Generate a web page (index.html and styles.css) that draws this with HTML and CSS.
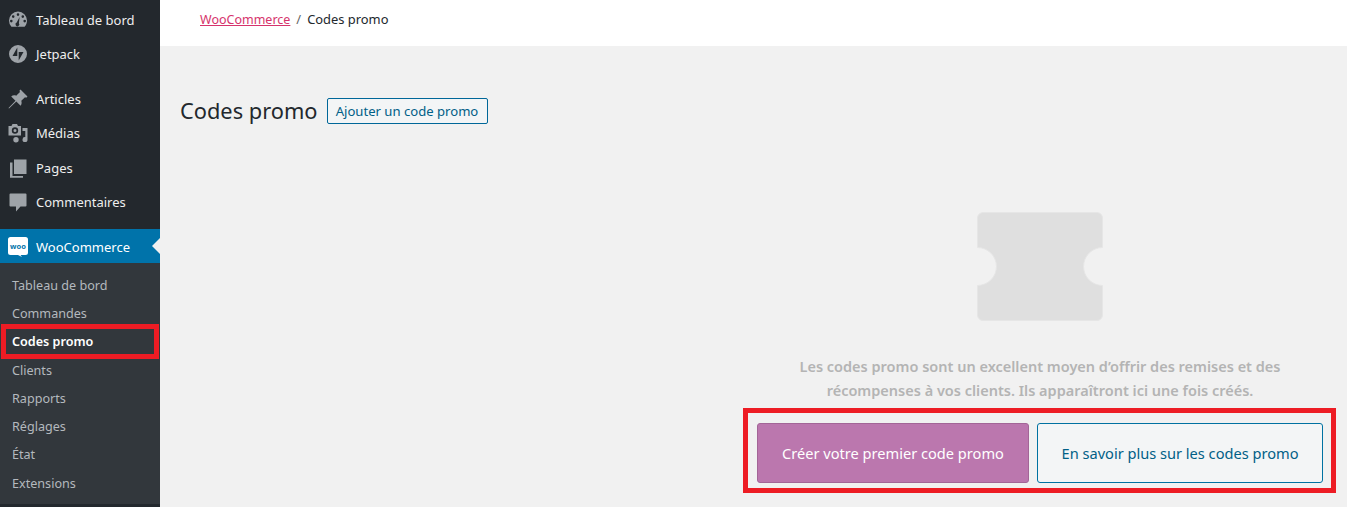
FILE: index.html
```html
<!DOCTYPE html>
<html>
<head>
    <title>Codes promo</title>
    <link rel="stylesheet" href="styles.css">
</head>
<body>
    <div class="page">
        <nav class="sidebar">
            <ul class="menu">
                <li class="menu-item">
                    <svg class="menu-icon" viewBox="0 0 20 20"><path fill-rule="evenodd" d="M10 1.500a9 9 0 0 1 9 9c0 2.500-.9 4.700-2.400 6.300H3.400A9 9 0 0 1 1 10.500a9 9 0 0 1 9-9zM10 3.300a1.300 1.300 0 1 0 0 2.600 1.300 1.300 0 0 0 0-2.600zM5.200 5.300a1.300 1.300 0 1 0 0 2.600 1.300 1.300 0 0 0 0-2.600zM14.800 5.300a1.300 1.300 0 1 0 0 2.600 1.300 1.300 0 0 0 0-2.600zM3.300 9.800a1.300 1.300 0 1 0 0 2.600 1.300 1.300 0 0 0 0-2.600zM16.700 9.800a1.300 1.300 0 1 0 0 2.600 1.300 1.300 0 0 0 0-2.600zM11.600 7l-2.900 5.600a1.900 1.900 0 1 0 2.200.6z"/></svg>
                    Tableau de bord
                </li>
                <li class="menu-item">
                    <svg class="menu-icon" viewBox="0 0 20 20"><path fill-rule="evenodd" d="M10 1a9 9 0 1 1 0 18 9 9 0 0 1 0-18zM9.300 3.500L4.500 12h4.800zM10.700 8v8.500l4.800-8.500z"/></svg>
                    Jetpack
                </li>
                <li class="menu-item menu-gap">
                    <svg class="menu-icon" viewBox="0 0 20 20"><path d="M12.500.5l7 7-1.300 1.200-1.200-.5-3.700 3.600c.7 2 .3 3.700-.7 5L8.300 12.500 1 19.500l-.5-.5 7-7.300L3.200 7.400c1.300-1 3-1.400 5-.7L12 3l-.6-1.300z"/></svg>
                    Articles
                </li>
                <li class="menu-item">
                    <svg class="menu-icon" viewBox="0 0 20 20"><path fill-rule="evenodd" d="M.5 3h3l1-2h4.500l1 2h3v9.500H.5zM7 4.300a3.200 3.200 0 1 0 0 6.400 3.200 3.200 0 0 0 0-6.400zM7 6a1.500 1.500 0 1 1 0 3 1.500 1.500 0 0 1 0-3zM14.500 5H19.500v11.500a2.500 2.500 0 1 1-2.200-2.400V8h-2.800zM8 14a2.700 2.700 0 1 1 0 5.400A2.700 2.700 0 0 1 8 14z"/></svg>
                    Médias
                </li>
                <li class="menu-item">
                    <svg class="menu-icon" viewBox="0 0 20 20"><path d="M6 1.500h12.500v14.500H6zM2 4.500h2.500v13.500H15v1.800H2z"/></svg>
                    Pages
                </li>
                <li class="menu-item">
                    <svg class="menu-icon" viewBox="0 0 20 20"><path d="M2.500 1.500h15a1 1 0 0 1 1 1v11a1 1 0 0 1-1 1h-5l-4.500 5v-5h-5.500a1 1 0 0 1-1-1v-11a1 1 0 0 1 1-1z"/></svg>
                    Commentaires
                </li>
                <li class="menu-item menu-woo">
                    <svg class="woo-logo" viewBox="0 0 20 20"><path class="woo-bubble" d="M2.500 0h15A2.500 2.500 0 0 1 20 2.500v13a2.500 2.500 0 0 1-2.500 2.500h-5l1.500 2-4-2H2.500A2.500 2.500 0 0 1 0 15.500v-13A2.500 2.500 0 0 1 2.500 0z"/><text class="woo-text" x="10" y="11.500">woo</text></svg>
                    WooCommerce
                    <span class="menu-arrow"></span>
                </li>
            </ul>
            <ul class="submenu">
                <li>Tableau de bord</li>
                <li>Commandes</li>
                <li class="current">Codes promo</li>
                <li>Clients</li>
                <li>Rapports</li>
                <li>Réglages</li>
                <li>État</li>
                <li>Extensions</li>
            </ul>
        </nav>

        <div class="main">
            <header class="breadcrumb">
                <a class="breadcrumb-link" href="#">WooCommerce</a>
                <span class="breadcrumb-sep">/</span>
                <span>Codes promo</span>
            </header>

            <div class="title-row">
                <h1>Codes promo</h1>
                <a class="add-button" href="#">Ajouter un code promo</a>
            </div>

            <section class="empty-state">
                <svg class="coupon" viewBox="0 0 126 109"><path d="M6 .5h114a5.500 5.500 0 0 1 5.500 5.500v29.500a19 19 0 0 0 0 38V103a5.500 5.500 0 0 1-5.500 5.500H6A5.500 5.500 0 0 1 .5 103V73.500a19 19 0 0 0 0-38V6A5.500 5.500 0 0 1 6 .5z"/></svg>
                <p>Les codes promo sont un excellent moyen d’offrir des remises et des récompenses à vos clients. Ils apparaîtront ici une fois créés.</p>
                <div class="actions">
                    <a class="action action-primary" href="#">Créer votre premier code promo</a>
                    <a class="action action-secondary" href="#">En savoir plus sur les codes promo</a>
                </div>
            </section>
        </div>
    </div>

    <!-- annotations on top of the screenshot -->
    <div class="mark mark-menu"></div>
    <div class="mark mark-actions"></div>
</body>
</html>
```

FILE: styles.css
```css
html, body {
    margin: 0;
    height: 507px;
    overflow: hidden;
}
body {
    position: relative;
    font-family: "Noto Sans", "Open Sans", sans-serif;
    font-size: 13px;
    background: #f1f1f1;
    color: #23282d;
}
ul {
    list-style: none;
    margin: 0;
    padding: 0;
}
a {
    text-decoration: none;
}
.page {
    display: flex;
    height: 507px;
}

/* sidebar */
.sidebar {
    width: 160px;
    flex-shrink: 0;
    background: #23282d;
}
.menu {
    padding-top: 3px;
}
.menu-item {
    display: flex;
    align-items: center;
    position: relative;
    height: 34.300px;
    padding-left: 8px;
    gap: 8px;
    color: #eee;
    font-size: 13px;
}
.menu-gap {
    margin-top: 10.200px;
}
.menu-icon {
    width: 20px;
    height: 20px;
    fill: #9ea3a8;
    flex-shrink: 0;
}
.menu-woo {
    box-sizing: border-box;
    margin-top: 10.300px;
    height: 33.500px;
    padding-top: 2px;
    background: #0073aa;
    color: #fff;
}
.woo-logo {
    width: 20px;
    height: 20px;
    flex-shrink: 0;
}
.woo-bubble {
    fill: #fff;
}
.woo-text {
    fill: #0073aa;
    font-size: 7.500px;
    font-weight: 700;
    text-anchor: middle;
}
.menu-arrow {
    position: absolute;
    right: 0;
    top: 9px;
    border: 8px solid transparent;
    border-right-color: #f1f1f1;
    border-left-width: 0;
}
.submenu {
    background: #32373c;
    padding: 9px 0 6px;
}
.submenu li {
    height: 28.250px;
    line-height: 28px;
    padding-left: 12px;
    font-size: 12.600px;
    color: #b4b9be;
}
.submenu .current {
    color: #fff;
    font-weight: 600;
}

/* main column */
.main {
    flex: 1;
    min-width: 0;
}
.breadcrumb {
    display: flex;
    align-items: center;
    gap: 6px;
    height: 38px;
    padding: 0 0 8px 40px;
    background: #fff;
    font-size: 12.900px;
    color: #23282d;
}
.breadcrumb-link {
    color: #d6336c;
    font-size: 12.500px;
    text-decoration: underline;
}
.breadcrumb-sep {
    color: #666;
}
.title-row {
    display: flex;
    align-items: center;
    gap: 9px;
    margin-top: 52px;
    padding-left: 20px;
}
h1 {
    margin: 0;
    font-size: 21.800px;
    font-weight: 400;
    line-height: 26px;
    color: #23282d;
}
.add-button {
    box-sizing: border-box;
    width: 161px;
    height: 26px;
    line-height: 25px;
    text-align: center;
    border: 1px solid #006799;
    border-radius: 2px;
    background: #f3f5f6;
    color: #016087;
    font-size: 13.100px;
}

/* empty state */
.empty-state {
    display: flex;
    flex-direction: column;
    align-items: center;
    width: 600px;
    margin: 88px 7px 0 auto;
}
.coupon {
    width: 126px;
    height: 109px;
    fill: #dfdfdf;
    stroke: #e6e6e6;
}
.empty-state p {
    width: 530px;
    margin: 33px 0 0;
    text-align: center;
    font-size: 14.500px;
    font-weight: 600;
    line-height: 24px;
    color: #b4b4b4;
}
.actions {
    display: flex;
    gap: 8px;
    margin-top: 21px;
}
.action {
    box-sizing: border-box;
    display: flex;
    align-items: center;
    justify-content: center;
    height: 60px;
    border-radius: 3px;
    font-size: 14.600px;
}
.action-primary {
    width: 272px;
    background: #bb77ae;
    border: 1px solid #a36597;
    color: #fff;
}
.action-secondary {
    width: 286px;
    background: #f3f5f6;
    border: 1px solid #0071a1;
    color: #016087;
}

/* red annotation boxes */
.mark {
    position: absolute;
    box-sizing: border-box;
    border: 5px solid #ed1c24;
}
.mark-menu {
    left: 1px;
    top: 324px;
    width: 158px;
    height: 35px;
}
.mark-actions {
    left: 743px;
    top: 408px;
    width: 593px;
    height: 85px;
}
```
